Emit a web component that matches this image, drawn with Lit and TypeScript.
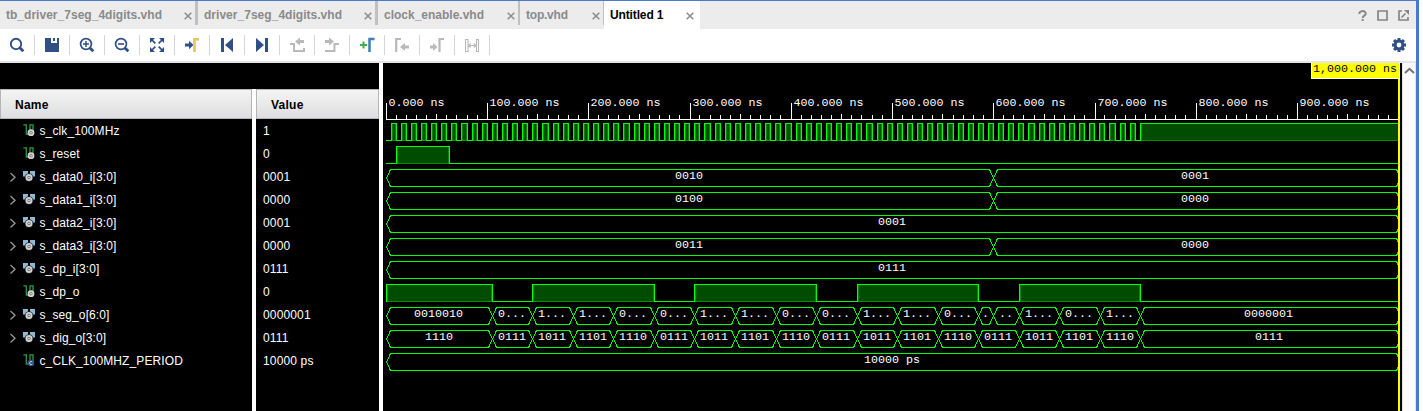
import { LitElement, html, svg, css } from "lit";
import { customElement, property } from "lit/decorators.js";

const BLUE = "#2f4f86";
const GREY = "#b9b9b9";

const TABS = [
  { name: "tb_driver_7seg_4digits.vhd", width: 195, textWidth: 156, sep: 3 },
  { name: "driver_7seg_4digits.vhd", width: 177, textWidth: 138, sep: 3 },
  { name: "clock_enable.vhd", width: 140, textWidth: 100, sep: 2 },
  { name: "top.vhd", width: 83, textWidth: 42, sep: 1 },
];

interface Signal {
  name: string;
  value: string;
  kind: "bit" | "bus" | "const";
}

const SIGNALS: Signal[] = [
  { name: "s_clk_100MHz", value: "1", kind: "bit" },
  { name: "s_reset", value: "0", kind: "bit" },
  { name: "s_data0_i[3:0]", value: "0001", kind: "bus" },
  { name: "s_data1_i[3:0]", value: "0000", kind: "bus" },
  { name: "s_data2_i[3:0]", value: "0001", kind: "bus" },
  { name: "s_data3_i[3:0]", value: "0000", kind: "bus" },
  { name: "s_dp_i[3:0]", value: "0111", kind: "bus" },
  { name: "s_dp_o", value: "0", kind: "bit" },
  { name: "s_seg_o[6:0]", value: "0000001", kind: "bus" },
  { name: "s_dig_o[3:0]", value: "0111", kind: "bus" },
  { name: "c_CLK_100MHZ_PERIOD", value: "10000 ps", kind: "const" },
];

// Each tool is drawn in a 34 x 20 cell.
const TOOLS = [
  svg`<circle cx="16" cy="9" r="5.2" fill="none" stroke=${BLUE} stroke-width="1.9"/><path d="M19.8 12.8L23.3 16.3" stroke=${BLUE} stroke-width="2.8"/>`,
  svg`<path d="M10 3h6v5h6v-5h2v14h-14z" fill=${BLUE}/><path d="M18 3h2v3h-2z" fill=${BLUE}/>`,
  svg`<circle cx="16" cy="9" r="5.4" fill="none" stroke=${BLUE} stroke-width="1.7"/><path d="M20 13L23.3 16.3" stroke=${BLUE} stroke-width="2.8"/><path d="M13 9h6M16 6v6" stroke=${BLUE} stroke-width="1.5"/>`,
  svg`<circle cx="16" cy="9" r="5.4" fill="none" stroke=${BLUE} stroke-width="1.7"/><path d="M20 13L23.3 16.3" stroke=${BLUE} stroke-width="2.8"/><path d="M13 9h6" stroke=${BLUE} stroke-width="1.6"/>`,
  svg`<path d="M10 3h5l-5 5zM24 3h-5l5 5zM10 17h5l-5-5zM24 17h-5l5-5z" fill=${BLUE}/><path d="M11 4l4.3 4.3M23 4l-4.3 4.3M11 16l4.3-4.3M23 16l-4.3-4.3" stroke=${BLUE} stroke-width="1.7"/>`,
  svg`<path d="M10 8.5h4v-2.700l4.500 4.200l-4.500 4.200v-2.700h-4z" fill=${BLUE}/><path d="M19.500 17v-12.700h4.500" fill="none" stroke="#e2c75b" stroke-width="2.600"/>`,
  svg`<path d="M11 3h3v14h-3zM23 3v14l-8-7z" fill=${BLUE}/>`,
  svg`<path d="M11 3v14l8-7zM20 3h3v14h-3z" fill=${BLUE}/>`,
  svg`<path d="M10 9h4v7h10v-3" fill="none" stroke=${GREY} stroke-width="2"/><path d="M24 5h-4v-2.500l-5 4l5 4v-2.500h4z" fill=${GREY}/>`,
  svg`<path d="M10 16h9.500v-7h4.500" fill="none" stroke=${GREY} stroke-width="2"/><path d="M10 5h4v-2.500l5 4l-5 4v-2.500h-4z" fill=${GREY}/>`,
  svg`<path d="M10 10h7M13.500 6.500v7" stroke="#3fae49" stroke-width="2"/><path d="M19.500 17v-13h5" fill="none" stroke="#3a7fb5" stroke-width="2.500"/>`,
  svg`<path d="M11.200 17v-13h4.800" fill="none" stroke=${GREY} stroke-width="2.200"/><path d="M24 10.500h-4v-2.500l-5 4l5 4v-2.500h4z" fill=${GREY}/>`,
  svg`<path d="M10 10.500h3v-2.500l4.500 4l-4.500 4v-2.500h-3z" fill=${GREY}/><path d="M19.500 17v-13h4.500" fill="none" stroke=${GREY} stroke-width="2.200"/>`,
  svg`<path d="M10.500 4.500h2.500v12h-2.500zM21.500 4.500h2v12h-2zM14 10.500h7M15.800 8.500l-2 2l2 2M18.700 8.500l2 2l-2 2" fill="none" stroke=${GREY} stroke-width="1.100"/>`,
];

const closeIcon = html`<svg class="close" width="8" height="8" viewBox="0 0 8 8">
  <path d="M.7 .7L7.3 7.300M7.300 .7L.7 7.300" stroke="#8b8b8b" stroke-width="1.500" />
</svg>`;

@customElement("sim-tabs")
class SimTabs extends LitElement {
  static styles = css`
    :host { display: flex; height: 28px; background: #ececec; font: bold 12px "Liberation Sans", Arial, sans-serif; color: #8a8a8a; }
    .tab { display: flex; box-sizing: border-box; padding: 0 3px 0 6px; height: 28px; }
    .label { height: 28px; display: block; overflow: visible; }
    .close { margin: 11px 0 0 auto; flex: none; }
    .sep { background: #c0c0c0; height: 24px; flex: none; }
    .active { background: #fff; width: 96px; padding-right: 6px; color: #000; }
    .win { margin: 8px 7px 0 auto; }
    text { fill: currentColor; }
  `;
  render() {
    return html`
      ${TABS.map(
        (t) => html`
          <div class="tab" style="width:${t.width}px">
            <svg class="label" width=${t.textWidth} height="28">
              <text x="0" y="18" textLength=${t.textWidth}>${t.name}</text>
            </svg>
            ${closeIcon}
          </div>
          <div class="sep" style="width:${t.sep}px"></div>
        `
      )}
      <div class="tab active">
        <svg class="label" width="54" height="28"><text x="0" y="18" textLength="53.500">Untitled 1</text></svg>
        ${closeIcon}
      </div>
      <svg class="win" width="52" height="14" viewBox="0 0 52 14" fill="none" stroke="#858585">
        <path d="M2.200 4.800C2.500 1.200 8.800 1.200 8.800 4.600C8.800 6.800 5.700 6.500 5.700 9M5.700 10v2" stroke-width="1.900" />
        <path d="M21 2h9v9h-9z" stroke-width="1.700" />
        <path d="M45 2h-3v9h9v-3M44.500 8.500l4-4" stroke-width="1.700" />
        <path d="M47 1h5v5z" fill="#858585" stroke="none" />
      </svg>
    `;
  }
}

@customElement("sim-toolbar")
class SimToolbar extends LitElement {
  static styles = css`
    :host { display: flex; height: 32px; background: #fff; border-bottom: 2px solid #e6e6e6; }
    .tool { width: 34px; height: 20px; margin-top: 6px; border-right: 1px solid #d6d6d6; flex: none; }
    .gear { margin: 8px 9px 0 auto; }
    svg { display: block; }
  `;
  render() {
    const teeth = [0, 45, 90, 135, 180, 225, 270, 315];
    return html`
      ${TOOLS.map((t) => html`<div class="tool"><svg width="34" height="20">${t}</svg></div>`)}
      <svg class="gear" width="16" height="16" viewBox="-8 -8 16 16">
        <circle r="3.900" fill="none" stroke=${BLUE} stroke-width="3" />
        ${teeth.map((a) => svg`<rect x="-1.500" y="-7" width="3" height="3" fill=${BLUE} transform="rotate(${a})"/>`)}
      </svg>
    `;
  }
}

@customElement("signal-icon")
class SignalIcon extends LitElement {
  @property() kind: Signal["kind"] = "bit";
  static styles = css`
    :host { display: block; width: 12px; height: 13px; }
    svg { display: block; }
  `;
  render() {
    const ring =
      this.kind === "const"
        ? svg`<circle cx="8" cy="9" r="3.300" fill="#35508a"/><path d="M9.200 7.800a1.600 1.600 0 1 0 0 2.400" fill="none" stroke="#c5cbe0" stroke-width=".9"/>`
        : this.kind === "bit"
        ? svg`<circle cx="8" cy="8.700" r="2.500" fill="#777" stroke="#d2d2d2" stroke-width="1.800"/><circle cx="8" cy="8.700" r=".8" fill="#eee"/>`
        : svg`<circle cx="6" cy="7.500" r="2.600" fill="#777" stroke="#d2d2d2" stroke-width="1.800"/><circle cx="6" cy="7.500" r=".8" fill="#eee"/>`;
    const base =
      this.kind === "bus"
        ? svg`<path d="M0 1h5v3h2v-3h5v5.500h-2v2h-8v-2h-2z" fill="#8fb9d2"/><circle cx="6" cy="7.500" r="4.200" fill="#1c262c"/>`
        : svg`<path d="M.3 .8h3v9.200h3.700v-9.200h3v7" fill="none" stroke="#2f9a48" stroke-width="1.300"/>`;
    return html`<svg width="12" height="13" viewBox="0 0 12 13">${base}${ring}</svg>`;
  }
}

@customElement("signal-table")
class SignalTable extends LitElement {
  static styles = css`
    :host { display: flex; flex-direction: column; width: 379px; background: #000; color: #fff; font: 12px "Liberation Sans", Arial, sans-serif; }
    .cols { display: flex; margin-top: 26px; flex: 1; }
    .names { width: 252px; border-right: 4px solid #fff; }
    .values { flex: 1; }
    .head { box-sizing: border-box; height: 30px; border: 1px solid #b4b4b4; background: linear-gradient(#f4f4f4, #dedee0); color: #000; font-weight: bold; line-height: 30px; padding-left: 14px; letter-spacing: 0.25px; }
    .row { display: flex; align-items: center; height: 23px; white-space: pre; }
    .arrow { width: 23px; height: 12px; flex: none; }
    .text { margin-left: 4.5px; display: block; height: 23px; line-height: 24px; letter-spacing: 0.11px; }
    .value { padding-left: 7px; line-height: 24px; letter-spacing: 0.15px; }
  `;
  render() {
    return html`
      <div class="cols">
        <div class="names">
          <div class="head">Name</div>
          ${SIGNALS.map(
            (s) => html`<div class="row">
              <svg class="arrow" width="23" height="12" viewBox="0 0 23 12">
                ${s.kind === "bus" ? svg`<path d="M10.500 2L15 6.200L10.500 10.400" fill="none" stroke="#9a9a9a" stroke-width="1.300"/>` : ""}
              </svg>
              <signal-icon .kind=${s.kind}></signal-icon>
              <span class="text">${s.name}</span>
            </div>`
          )}
        </div>
        <div class="values">
          <div class="head">Value</div>
          ${SIGNALS.map((s) => html`<div class="row value">${s.value}</div>`)}
        </div>
      </div>
    `;
  }
}

// Horizontal extent of the plot and the pixels per nanosecond.
const X0 = 386;
const X_END = 1400;
const SCALE = 1.0125;
const DIGIT_EDGES = [386, 492, 532, 573, 613, 654, 694, 735, 776, 816, 857, 897, 938, 978, 1019, 1059, 1100, 1140, X_END];
const SEG_EDGES = [...DIGIT_EDGES.slice(0, 14), 993, ...DIGIT_EDGES.slice(14)];
const DIGITS = ["1110", "0111", "1011", "1101", "1110", "0111", "1011", "1101", "1110", "0111", "1011", "1101", "1110", "0111", "1011", "1101", "1110", "0111"];
const SEGMENTS = ["0010010", "0...", "1...", "1...", "0...", "0...", "1...", "1...", "0...", "0...", "1...", "1...", "0...", ".", "..", "1...", "0...", "1...", "0000001"];

const rowTop = (row: number) => 123 + row * 23;

const label = (x: number, y: number, text: string) =>
  svg`<text x=${x} y=${y} textLength=${text.length * 7} lengthAdjust="spacingAndGlyphs">${text}</text>`;

const bus = (row: number, edges: number[], values: string[]) => {
  const y = rowTop(row) + 0.5;
  return values.map((v, i) => {
    const a = edges[i] + 0.5;
    const b = edges[i + 1] + 0.5;
    const mid = (a + Math.min(b, 1398.5)) / 2;
    return svg`
      <path class="line" d="M${a} ${y + 8.5}L${a + 4} ${y}M${a} ${y + 8.5}L${a + 4} ${y + 17}M${b} ${y + 8.5}L${b - 4} ${y}M${b} ${y + 8.5}L${b - 4} ${y + 17}"/>
      <rect class="solid" x=${a + 3.5} y=${y - 0.5} width=${b - a - 7} height="1"/>
      <rect class="solid" x=${a + 3.5} y=${y + 16.5} width=${b - a - 7} height="1"/>
      ${label(Math.round(mid - v.length * 3.5 - 0.7), y + 9.5, v)}`;
  });
};

const bit = (row: number, pulses: [number, number][], end = 1399) => {
  const y = rowTop(row);
  // Low stretches lie between one falling edge and the next rising edge.
  const starts = [X0, ...pulses.map((p) => p[1])];
  const ends = [...pulses.map((p) => p[0]), end];
  return svg`
    ${starts.map((a, i) =>
      ends[i] > a ? svg`<rect class="solid" x=${a} y=${y + 17} width=${ends[i] - a} height="1"/>` : ""
    )}
    ${pulses.map(
      ([a, b]) => svg`<rect class="solid" x=${a} y=${y} width=${b - a + 1} height="18"/>
        <rect x=${a + 1} y=${y + 1} width=${b - a - 1} height="17" fill="#008c00"/>
        <rect x=${a + 2} y=${y + 1} width=${b - a - 3} height="16" fill="#004c00"/>`
    )}`;
};

@customElement("wave-view")
class WaveView extends LitElement {
  static styles = css`
    :host { display: block; width: 1019px; background: #000; }
    svg { display: block; shape-rendering: crispEdges; }
    .line { fill: none; stroke: #00ff00; stroke-width: 1; }
    .solid { fill: #00ff00; }
    text { fill: #fff; font: 11.500px "Liberation Mono", "Courier New", monospace; white-space: pre; }
    .cursor { fill: #000; }
  `;
  render() {
    const clock: [number, number][] = [];
    for (let t = 5; t < 740; t += 10) clock.push([Math.floor(X0 + t * SCALE), Math.floor(X0 + (t + 5) * SCALE)]);
    clock.push([1140, 1400]);
    const ticks = Array.from({ length: 100 }, (_, i) => i);
    return html`<svg width="1019" height="348" viewBox="383 63 1019 348">
      <rect x="386" y="119" width="1013" height="1" fill="#fff" />
      ${ticks.map((i) => {
        const x = i % 10 ? Math.floor(X0 + i * 10 * SCALE) : Math.round(X0 - 0.1 + i * 10 * SCALE);
        const top = i % 10 === 0 ? 103 : i % 5 === 0 ? 114 : 115;
        return svg`<rect x=${x} y=${top} width="1" height=${119 - top} fill="#fff"/>
          ${i % 10 === 0 ? label(x + 2.5, 106, `${i * 10}.000 ns`) : ""}`;
      })}
      ${bit(0, clock)}
      ${bit(1, [[396, 449]])}
      ${bus(2, [X0, 993, X_END], ["0010", "0001"])}
      ${bus(3, [X0, 993, X_END], ["0100", "0000"])}
      ${bus(4, [X0, X_END], ["0001"])}
      ${bus(5, [X0, 993, X_END], ["0011", "0000"])}
      ${bus(6, [X0, X_END], ["0111"])}
      ${bit(7, [[386, 492], [532, 654], [694, 816], [857, 978], [1019, 1140]])}
      ${bus(8, SEG_EDGES, SEGMENTS)}
      ${bus(9, DIGIT_EDGES, DIGITS)}
      ${bus(10, [X0, X_END], ["10000 ps"])}
      <rect x="1398" y="63" width="2" height="348" fill="#ffff00" />
      <rect x="1400" y="63" width="2" height="348" fill="#000" />
      <rect x="1311" y="63" width="89" height="16" fill="#fff" />
      <rect x="1312" y="63" width="87" height="15" fill="#ffff00" />
      <text class="cursor" x="1313" y="72" textLength="84" lengthAdjust="spacingAndGlyphs">1,000.000 ns</text>
    </svg>`;
  }
}

@customElement("app-root")
class AppRoot extends LitElement {
  static styles = css`
    :host { display: block; width: 1423px; height: 411px; background: #fff; overflow: hidden; }
    .frame { box-sizing: border-box; width: 1419px; height: 411px; border-top: 1px solid #4a7bcb; border-right: 3px solid #4a7bcb; display: flex; flex-direction: column; }
    .body { display: flex; flex: 1; }
    .gap { width: 4px; background: #fff; }
    .scroll { flex: 1; background: #fafafa; border-left: 1px solid #e4e4e4; border-right: 1px solid #e4e4e4; }
    .up { display: block; margin: 4px 0 0 1px; }
  `;
  render() {
    return html`<div class="frame">
      <sim-tabs></sim-tabs>
      <sim-toolbar></sim-toolbar>
      <div class="body">
        <signal-table></signal-table>
        <div class="gap"></div>
        <wave-view></wave-view>
        <div class="scroll">
          <svg class="up" width="11" height="8" viewBox="0 0 11 8">
            <path d="M1 6L5.500 1.800L10 6" fill="none" stroke="#707070" stroke-width="1.900" />
          </svg>
        </div>
      </div>
    </div>`;
  }
}
